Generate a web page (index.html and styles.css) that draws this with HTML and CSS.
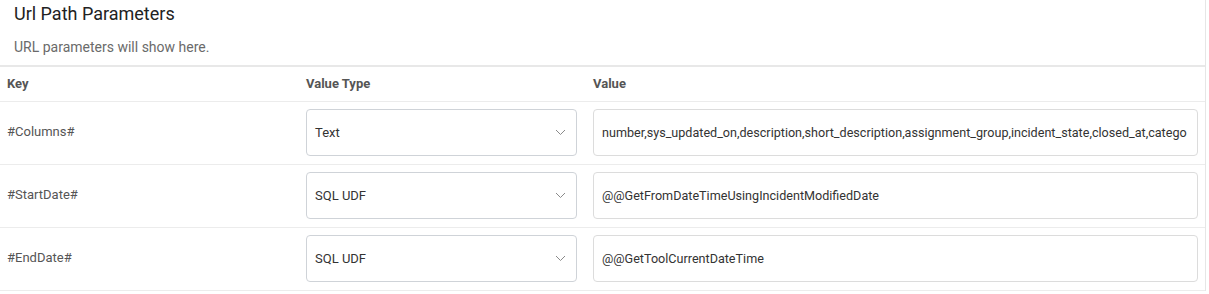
FILE: index.html
```html
<!DOCTYPE html>
<html lang="en">
<head>
  <meta charset="utf-8">
  <title>Url Path Parameters</title>
  <link rel="stylesheet" href="styles.css">
</head>
<body>
  <section class="panel">
    <header class="panel-head">
      <h3>Url Path Parameters</h3>
      <p class="hint">URL parameters will show here.</p>
    </header>

    <table class="params">
      <thead>
        <tr>
          <th class="col-key">Key</th>
          <th class="col-type">Value Type</th>
          <th class="col-value">Value</th>
        </tr>
      </thead>
      <tbody>
        <tr>
          <td class="key">#Columns#</td>
          <td>
            <div class="select">
              <span>Text</span>
              <svg class="chevron" width="11" height="7" viewBox="0 0 11 7"><path d="M1 1l4.5 4.5L10 1" fill="none" stroke="#8a8a8a" stroke-width="1"/></svg>
            </div>
          </td>
          <td><div class="input"><span>number,sys_updated_on,description,short_description,assignment_group,incident_state,closed_at,catego</span></div></td>
        </tr>
        <tr>
          <td class="key">#StartDate#</td>
          <td>
            <div class="select">
              <span>SQL UDF</span>
              <svg class="chevron" width="11" height="7" viewBox="0 0 11 7"><path d="M1 1l4.5 4.5L10 1" fill="none" stroke="#8a8a8a" stroke-width="1"/></svg>
            </div>
          </td>
          <td><div class="input"><span>@@GetFromDateTimeUsingIncidentModifiedDate</span></div></td>
        </tr>
        <tr>
          <td class="key">#EndDate#</td>
          <td>
            <div class="select">
              <span>SQL UDF</span>
              <svg class="chevron" width="11" height="7" viewBox="0 0 11 7"><path d="M1 1l4.5 4.5L10 1" fill="none" stroke="#8a8a8a" stroke-width="1"/></svg>
            </div>
          </td>
          <td><div class="input"><span>@@GetToolCurrentDateTime</span></div></td>
        </tr>
      </tbody>
    </table>
  </section>
</body>
</html>
```

FILE: styles.css
```css
* {
  box-sizing: border-box;
}

body {
  margin: 0;
  background: #ffffff;
  color: #333333;
  font-family: "Roboto", "Liberation Sans", sans-serif;
}

.panel {
  width: 1206px;
  border-right: 1px solid #e6e6e6;
}

.panel-head {
  height: 67px;
  padding: 2px 14px 0;
  border-bottom: 2px solid #e8e8e8;
}

.panel-head h3 {
  margin: 0;
  font-size: 18px;
  font-weight: 400;
  line-height: 24px;
  color: #222222;
}

.hint {
  margin: 11px 0 0;
  font-size: 14px;
  line-height: 20px;
  color: #6a6a6a;
}

.params {
  width: 1205px;
  border-collapse: collapse;
  table-layout: fixed;
  font-size: 13px;
}

.col-key {
  width: 299px;
}

.col-type {
  width: 287px;
}

.params th {
  height: 34px;
  padding: 0 7px;
  text-align: left;
  font-weight: 700;
  color: #555555;
  border-bottom: 1px solid #ececec;
}

.params td {
  height: 63px;
  padding: 0 7px;
  border-bottom: 1px solid #ececec;
}

.params td.key {
  color: #555555;
  padding-bottom: 2px;
}

.select,
.input {
  height: 47px;
  display: flex;
  align-items: center;
  padding: 0 8px;
  border-radius: 4px;
  color: #333333;
  white-space: nowrap;
}

.select {
  width: 271px;
  justify-content: space-between;
  border: 1px solid #cfd3d8;
}

.chevron {
  margin-right: 2px;
}

.input {
  width: 605px;
  font-size: 12.6px;
  border: 1px solid #dcdcdc;
}
```
